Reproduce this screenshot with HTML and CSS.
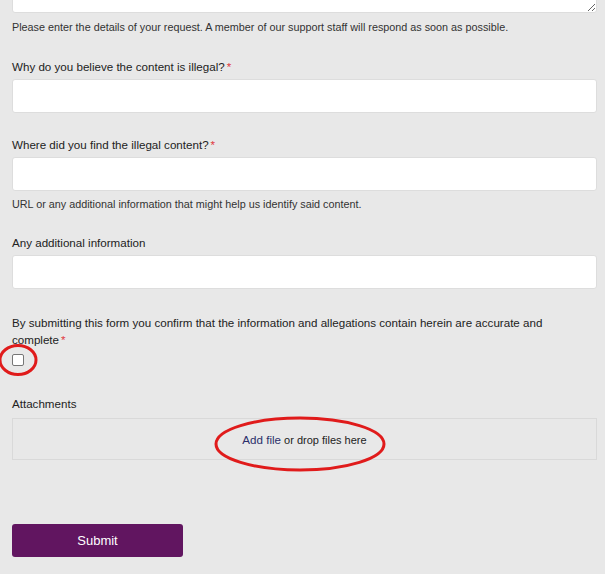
FILE: index.html
```html
<!DOCTYPE html>
<html>
<head>
<meta charset="utf-8">
<link rel="stylesheet" href="styles.css">
</head>
<body>
<form class="form">
  <div class="field field-first">
    <textarea class="textarea"></textarea>
    <p class="help">Please enter the details of your request. A member of our support staff will respond as soon as possible.</p>
  </div>
  <div class="field">
    <label class="label">Why do you believe the content is illegal?<span class="req">*</span></label>
    <input class="input" type="text">
  </div>
  <div class="field field-help">
    <label class="label">Where did you find the illegal content?<span class="req">*</span></label>
    <input class="input" type="text">
    <p class="help help-url">URL or any additional information that might help us identify said content.</p>
  </div>
  <div class="field field-any">
    <label class="label">Any additional information</label>
    <input class="input" type="text">
  </div>
  <div class="field field-check">
    <label class="label label-multi">By submitting this form you confirm that the information and allegations contain herein are accurate and complete<span class="req">*</span></label>
    <div class="check-wrap">
      <span class="checkbox"></span>
      <svg class="circle circle-check" width="42" height="36" viewBox="0 0 42 36"><ellipse cx="21" cy="18" rx="18" ry="14.5" fill="none" stroke="#e01b1b" stroke-width="3"/></svg>
    </div>
  </div>
  <div class="field field-attach">
    <label class="label">Attachments</label>
    <div class="dropzone">
      <span class="drop-text"><span class="add">Add file</span> or drop files here</span>
      <svg class="circle circle-drop" width="176" height="60" viewBox="0 0 176 60"><ellipse cx="88" cy="30" rx="84" ry="26" fill="none" stroke="#e01b1b" stroke-width="3"/></svg>
    </div>
  </div>
  <div class="actions">
    <button class="submit" type="button">Submit</button>
  </div>
</form>
</body>
</html>
```

FILE: styles.css
```css
html, body {
  margin: 0;
  padding: 0;
  background: #e8e8e8;
  font-family: "Liberation Sans", Arial, sans-serif;
  color: #222;
  overflow: hidden;
}
.form {
  padding: 0 8px 0 12px;
}
.field {
  margin-bottom: 24px;
}
.field-first {
  margin-bottom: 25px;
}
.textarea {
  display: block;
  box-sizing: border-box;
  width: 100%;
  height: 60px;
  margin: -47px 0 0;
  background: #fff;
  border: 1px solid #ddd;
  border-radius: 3px;
  resize: vertical;
}
.help {
  margin: 7px 0 0;
  font-size: 10.8px;
  line-height: 14px;
  color: #333;
}
.help-url {
  margin-top: 6px;
}
.label {
  display: block;
  font-size: 11.6px;
  line-height: 16px;
  margin-bottom: 4px;
  color: #222;
}
.label-multi {
  line-height: 17px;
}
.req {
  color: #e0393e;
  margin-left: 2px;
}
.input {
  display: block;
  box-sizing: border-box;
  width: 100%;
  height: 34px;
  background: #fff;
  border: 1px solid #ddd;
  border-radius: 3px;
  margin: 0;
}
.field-help {
  margin-bottom: 24px;
}
.field-any {
  margin-bottom: 25px;
}
.field-check {
  margin-bottom: 30px;
}
.field-check .label {
  margin-bottom: 6px;
}
.check-wrap {
  position: relative;
  height: 12px;
}
.checkbox {
  display: block;
  box-sizing: border-box;
  width: 12px;
  height: 12px;
  border: 1px solid #767676;
  border-radius: 2px;
  background: #fff;
}
.circle {
  position: absolute;
  pointer-events: none;
}
.circle-check {
  left: -15px;
  top: -12px;
}
.field-attach .label {
  margin-bottom: 6px;
}
.dropzone {
  position: relative;
  box-sizing: border-box;
  height: 42px;
  border: 1px solid #d9d9d9;
  display: flex;
  align-items: center;
  justify-content: center;
  font-size: 11px;
  color: #222;
}
.drop-text .add {
  font-size: 11.6px;
  color: #2b2f6b;
}
.circle-drop {
  left: 199px;
  top: -5px;
}
.actions {
  padding-top: 40px;
}
.submit {
  width: 171px;
  height: 33px;
  background: #611560;
  color: #fff;
  border: none;
  border-radius: 3px;
  font-family: "Liberation Sans", Arial, sans-serif;
  font-size: 13px;
  padding: 0;
}
```
